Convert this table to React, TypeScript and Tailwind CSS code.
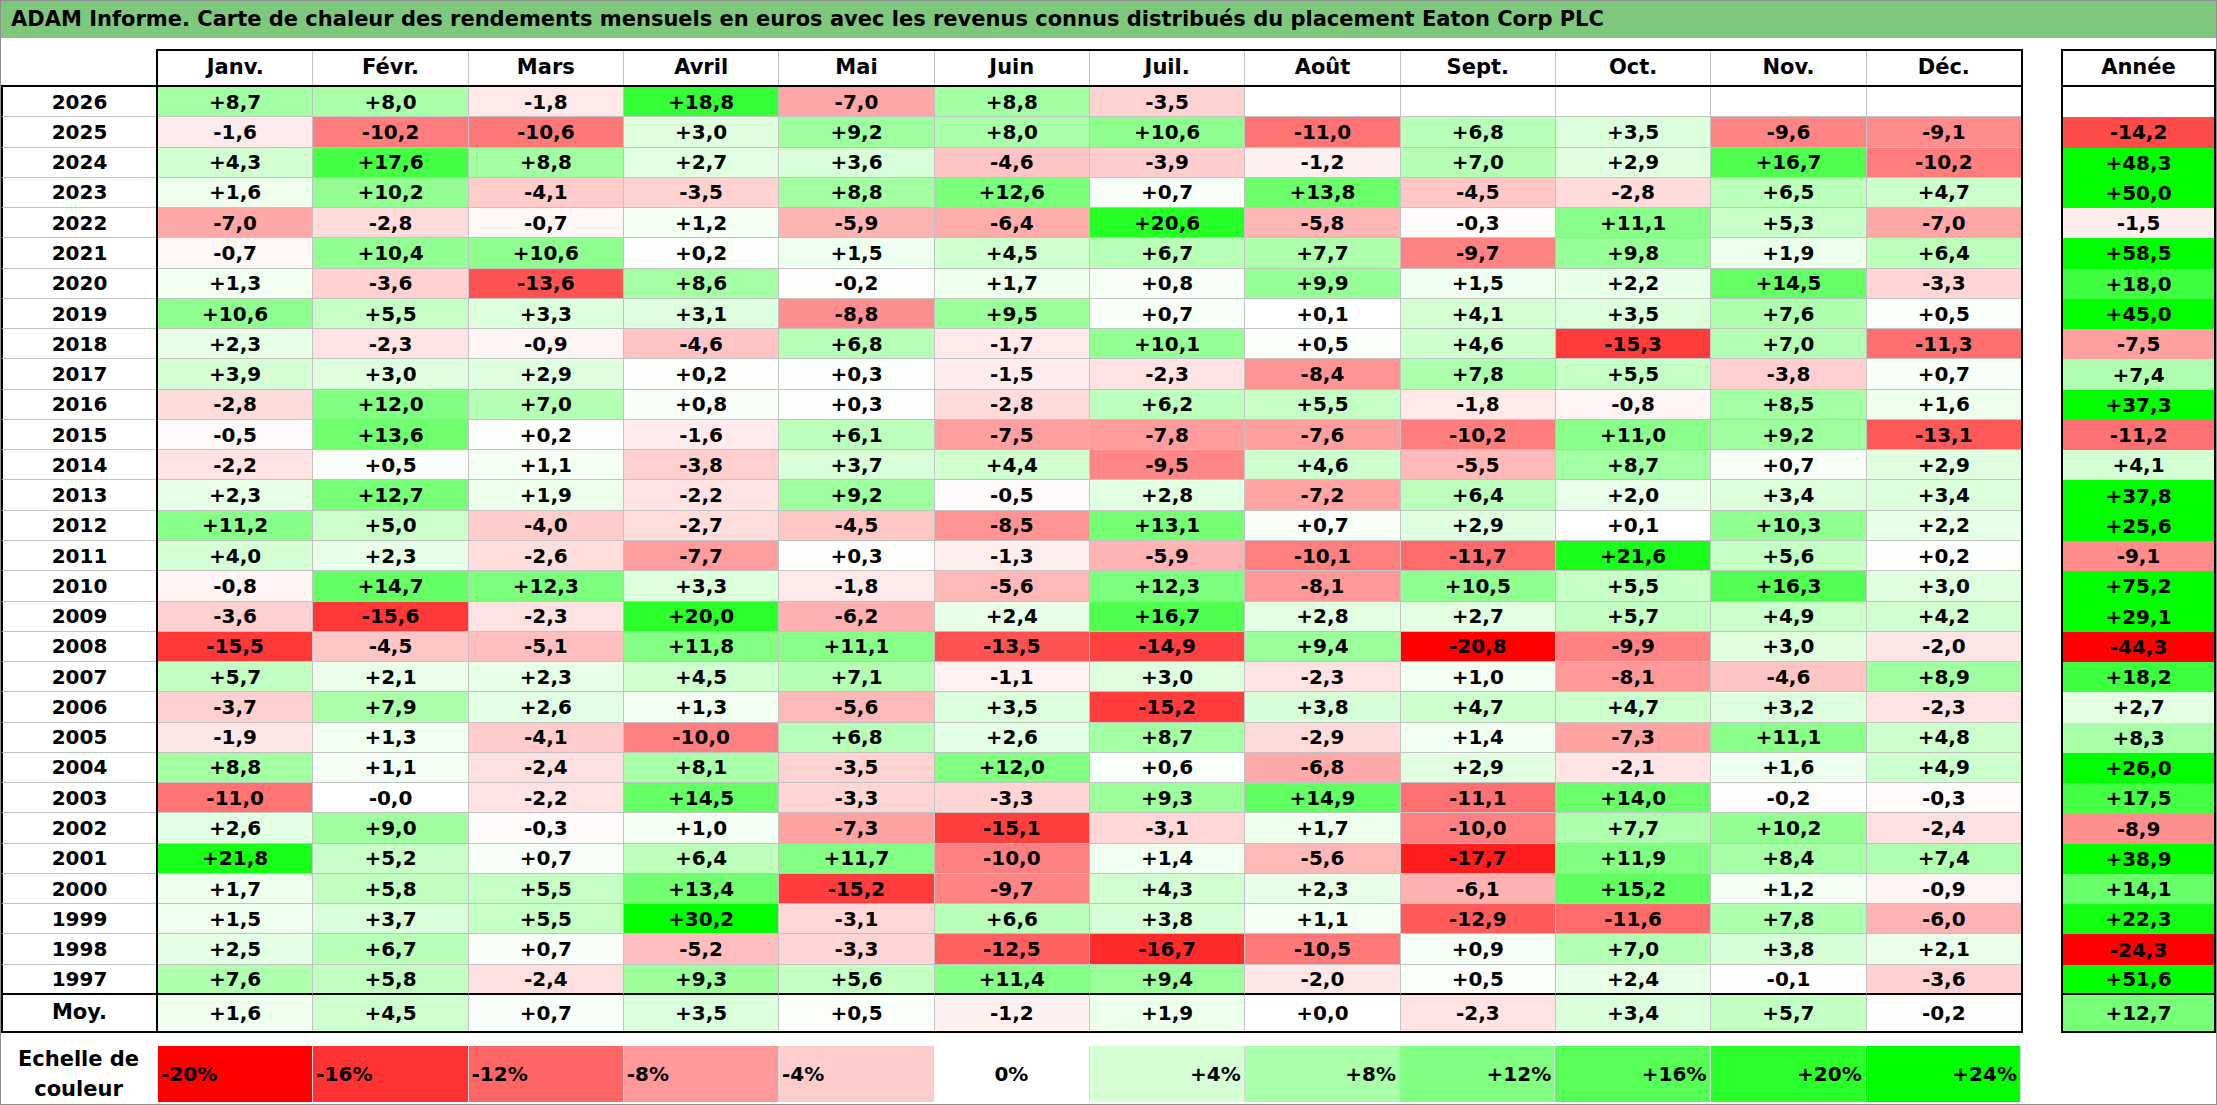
import React from "react";

const MONTHS = ["Janv.", "Févr.", "Mars", "Avril", "Mai", "Juin", "Juil.", "Août", "Sept.", "Oct.", "Nov.", "Déc."];

// année, 12 mois (vide = ""), total de l'année
const ROWS: [string, string[], string][] = [
  ["2026", ["+8,7", "+8,0", "-1,8", "+18,8", "-7,0", "+8,8", "-3,5", "", "", "", "", ""], ""],
  ["2025", ["-1,6", "-10,2", "-10,6", "+3,0", "+9,2", "+8,0", "+10,6", "-11,0", "+6,8", "+3,5", "-9,6", "-9,1"], "-14,2"],
  ["2024", ["+4,3", "+17,6", "+8,8", "+2,7", "+3,6", "-4,6", "-3,9", "-1,2", "+7,0", "+2,9", "+16,7", "-10,2"], "+48,3"],
  ["2023", ["+1,6", "+10,2", "-4,1", "-3,5", "+8,8", "+12,6", "+0,7", "+13,8", "-4,5", "-2,8", "+6,5", "+4,7"], "+50,0"],
  ["2022", ["-7,0", "-2,8", "-0,7", "+1,2", "-5,9", "-6,4", "+20,6", "-5,8", "-0,3", "+11,1", "+5,3", "-7,0"], "-1,5"],
  ["2021", ["-0,7", "+10,4", "+10,6", "+0,2", "+1,5", "+4,5", "+6,7", "+7,7", "-9,7", "+9,8", "+1,9", "+6,4"], "+58,5"],
  ["2020", ["+1,3", "-3,6", "-13,6", "+8,6", "-0,2", "+1,7", "+0,8", "+9,9", "+1,5", "+2,2", "+14,5", "-3,3"], "+18,0"],
  ["2019", ["+10,6", "+5,5", "+3,3", "+3,1", "-8,8", "+9,5", "+0,7", "+0,1", "+4,1", "+3,5", "+7,6", "+0,5"], "+45,0"],
  ["2018", ["+2,3", "-2,3", "-0,9", "-4,6", "+6,8", "-1,7", "+10,1", "+0,5", "+4,6", "-15,3", "+7,0", "-11,3"], "-7,5"],
  ["2017", ["+3,9", "+3,0", "+2,9", "+0,2", "+0,3", "-1,5", "-2,3", "-8,4", "+7,8", "+5,5", "-3,8", "+0,7"], "+7,4"],
  ["2016", ["-2,8", "+12,0", "+7,0", "+0,8", "+0,3", "-2,8", "+6,2", "+5,5", "-1,8", "-0,8", "+8,5", "+1,6"], "+37,3"],
  ["2015", ["-0,5", "+13,6", "+0,2", "-1,6", "+6,1", "-7,5", "-7,8", "-7,6", "-10,2", "+11,0", "+9,2", "-13,1"], "-11,2"],
  ["2014", ["-2,2", "+0,5", "+1,1", "-3,8", "+3,7", "+4,4", "-9,5", "+4,6", "-5,5", "+8,7", "+0,7", "+2,9"], "+4,1"],
  ["2013", ["+2,3", "+12,7", "+1,9", "-2,2", "+9,2", "-0,5", "+2,8", "-7,2", "+6,4", "+2,0", "+3,4", "+3,4"], "+37,8"],
  ["2012", ["+11,2", "+5,0", "-4,0", "-2,7", "-4,5", "-8,5", "+13,1", "+0,7", "+2,9", "+0,1", "+10,3", "+2,2"], "+25,6"],
  ["2011", ["+4,0", "+2,3", "-2,6", "-7,7", "+0,3", "-1,3", "-5,9", "-10,1", "-11,7", "+21,6", "+5,6", "+0,2"], "-9,1"],
  ["2010", ["-0,8", "+14,7", "+12,3", "+3,3", "-1,8", "-5,6", "+12,3", "-8,1", "+10,5", "+5,5", "+16,3", "+3,0"], "+75,2"],
  ["2009", ["-3,6", "-15,6", "-2,3", "+20,0", "-6,2", "+2,4", "+16,7", "+2,8", "+2,7", "+5,7", "+4,9", "+4,2"], "+29,1"],
  ["2008", ["-15,5", "-4,5", "-5,1", "+11,8", "+11,1", "-13,5", "-14,9", "+9,4", "-20,8", "-9,9", "+3,0", "-2,0"], "-44,3"],
  ["2007", ["+5,7", "+2,1", "+2,3", "+4,5", "+7,1", "-1,1", "+3,0", "-2,3", "+1,0", "-8,1", "-4,6", "+8,9"], "+18,2"],
  ["2006", ["-3,7", "+7,9", "+2,6", "+1,3", "-5,6", "+3,5", "-15,2", "+3,8", "+4,7", "+4,7", "+3,2", "-2,3"], "+2,7"],
  ["2005", ["-1,9", "+1,3", "-4,1", "-10,0", "+6,8", "+2,6", "+8,7", "-2,9", "+1,4", "-7,3", "+11,1", "+4,8"], "+8,3"],
  ["2004", ["+8,8", "+1,1", "-2,4", "+8,1", "-3,5", "+12,0", "+0,6", "-6,8", "+2,9", "-2,1", "+1,6", "+4,9"], "+26,0"],
  ["2003", ["-11,0", "-0,0", "-2,2", "+14,5", "-3,3", "-3,3", "+9,3", "+14,9", "-11,1", "+14,0", "-0,2", "-0,3"], "+17,5"],
  ["2002", ["+2,6", "+9,0", "-0,3", "+1,0", "-7,3", "-15,1", "-3,1", "+1,7", "-10,0", "+7,7", "+10,2", "-2,4"], "-8,9"],
  ["2001", ["+21,8", "+5,2", "+0,7", "+6,4", "+11,7", "-10,0", "+1,4", "-5,6", "-17,7", "+11,9", "+8,4", "+7,4"], "+38,9"],
  ["2000", ["+1,7", "+5,8", "+5,5", "+13,4", "-15,2", "-9,7", "+4,3", "+2,3", "-6,1", "+15,2", "+1,2", "-0,9"], "+14,1"],
  ["1999", ["+1,5", "+3,7", "+5,5", "+30,2", "-3,1", "+6,6", "+3,8", "+1,1", "-12,9", "-11,6", "+7,8", "-6,0"], "+22,3"],
  ["1998", ["+2,5", "+6,7", "+0,7", "-5,2", "-3,3", "-12,5", "-16,7", "-10,5", "+0,9", "+7,0", "+3,8", "+2,1"], "-24,3"],
  ["1997", ["+7,6", "+5,8", "-2,4", "+9,3", "+5,6", "+11,4", "+9,4", "-2,0", "+0,5", "+2,4", "-0,1", "-3,6"], "+51,6"],
];

const AVG: string[] = ["+1,6", "+4,5", "+0,7", "+3,5", "+0,5", "-1,2", "+1,9", "+0,0", "-2,3", "+3,4", "+5,7", "-0,2"];
const AVG_YEAR = "+12,7";

const SCALE = ["-20%", "-16%", "-12%", "-8%", "-4%", "0%", "+4%", "+8%", "+12%", "+16%", "+20%", "+24%"];

// blanc -> vert à +24 %, blanc -> rouge à -20 %
function heat(s: string): string {
  if (!s) return "#ffffff";
  const v = parseFloat(s.replace(",", ".").replace("%", ""));
  if (v >= 0) {
    const c = Math.round(255 * (1 - Math.min(v / 24, 1)));
    return `rgb(${c},255,${c})`;
  }
  const c = Math.round(255 * (1 - Math.min(-v / 20, 1)));
  return `rgb(255,${c},${c})`;
}

function DataRow({ label, values, year, last }: { label: string; values: string[]; year: string; last?: boolean }) {
  const line = last ? "border-b-2 border-b-black" : "border-b border-b-[#c3c3c3]";
  return (
    <div className="flex h-[30.27px]">
      <div className={`w-[155px] border-l-2 border-l-black flex items-center justify-center ${line}`}>{label}</div>
      <div className="w-[1867px] flex border-x-2 border-black">
        {values.map((v, i) => (
          <div
            key={i}
            className={`flex-1 flex items-center justify-center ${i > 0 ? "border-l border-l-[#c3c3c3]" : ""} ${line}`}
            style={{ backgroundColor: heat(v) }}
          >
            {v}
          </div>
        ))}
      </div>
      <div className="w-[38px]" />
      <div
        className={`w-[155px] border-x-2 border-black flex items-center justify-center ${last ? "border-b-2 border-b-black" : ""}`}
        style={{ backgroundColor: heat(year) }}
      >
        {year}
      </div>
    </div>
  );
}

export default function App() {
  return (
    <div className="w-[2217px] h-[1105px] bg-white border border-[#8f8f8f] text-black font-bold font-['DejaVu_Sans',sans-serif] text-[20px] overflow-hidden">
      <div className="h-[37px] bg-[#7ec87e] flex items-center pl-[10px] text-[21px]">
        ADAM Informe. Carte de chaleur des rendements mensuels en euros avec les revenus connus distribués du placement Eaton Corp PLC
      </div>

      <div className="mt-[11px]">
        {/* en-tête */}
        <div className="flex h-[38px] text-[21px]">
          <div className="w-[155px] border-b-2 border-black" />
          <div className="w-[1867px] flex border-2 border-black">
            {MONTHS.map((m, i) => (
              <div key={m} className={`flex-1 flex items-center justify-center ${i > 0 ? "border-l border-l-[#c3c3c3]" : ""}`}>
                {m}
              </div>
            ))}
          </div>
          <div className="w-[38px]" />
          <div className="w-[155px] border-2 border-black flex items-center justify-center">Année</div>
        </div>

        {ROWS.map(([label, values, year], i) => (
          <DataRow key={label} label={label} values={values} year={year} last={i === ROWS.length - 1} />
        ))}

        {/* moyenne */}
        <div className="flex h-[38px]">
          <div className="w-[155px] border-l-2 border-b-2 border-black flex items-center justify-center text-[21px]">Moy.</div>
          <div className="w-[1867px] flex border-x-2 border-b-2 border-black">
            {AVG.map((v, i) => (
              <div
                key={i}
                className={`flex-1 flex items-center justify-center ${i > 0 ? "border-l border-l-[#c3c3c3]" : ""}`}
                style={{ backgroundColor: heat(v) }}
              >
                {v}
              </div>
            ))}
          </div>
          <div className="w-[38px]" />
          <div className="w-[155px] border-x-2 border-b-2 border-black flex items-center justify-center" style={{ backgroundColor: heat(AVG_YEAR) }}>
            {AVG_YEAR}
          </div>
        </div>

        {/* échelle */}
        <div className="flex h-[56px] mt-[13px]">
          <div className="w-[155px] flex items-center justify-center text-center text-[21px] leading-[30px]">
            Echelle de<br />couleur
          </div>
          <div className="w-[1867px] flex px-[2px]">
            {SCALE.map((s, i) => (
              <div
                key={s}
                className={`flex-1 flex items-center px-[3px] border-r border-r-[#d8d8d8] ${i < 5 ? "justify-start" : i === 5 ? "justify-center" : "justify-end"}`}
                style={{ backgroundColor: heat(s) }}
              >
                {s}
              </div>
            ))}
          </div>
        </div>
      </div>
    </div>
  );
}
